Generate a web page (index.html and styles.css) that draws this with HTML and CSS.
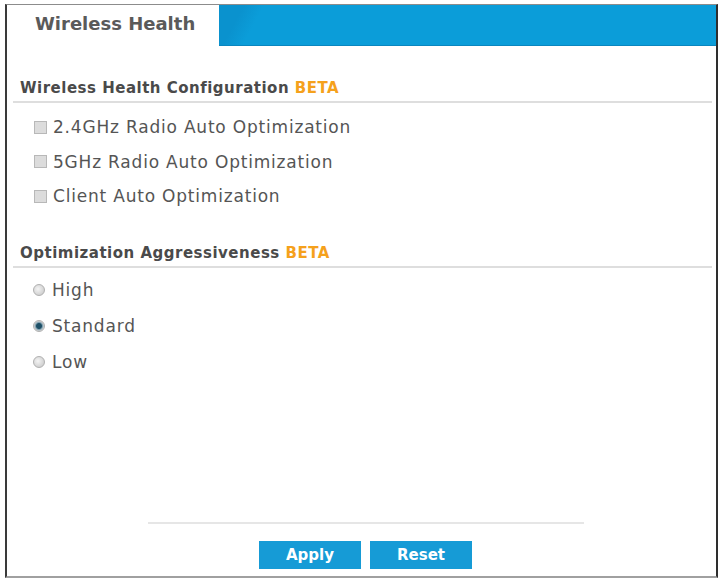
FILE: index.html
```html
<!DOCTYPE html>
<html lang="en">
<head>
    <meta charset="UTF-8">
    <meta name="viewport" content="width=device-width, initial-scale=1.0">
    <title>Wireless Health</title>
    <link rel="stylesheet" href="styles.css">
</head>
<body>
    <div class="frame">
        <div class="tabBar">
            <div class="tab">Wireless Health</div>
            <div class="tabFill"></div>
        </div>

        <div class="content">
            <div class="section">
                <h3 class="sectionTitle">Wireless Health Configuration <span class="beta">BETA</span></h3>
                <label class="option"><input type="checkbox" class="check"> 2.4GHz Radio Auto Optimization</label>
                <label class="option"><input type="checkbox" class="check"> 5GHz Radio Auto Optimization</label>
                <label class="option"><input type="checkbox" class="check"> Client Auto Optimization</label>
            </div>

            <div class="section radioGroup">
                <h3 class="sectionTitle">Optimization Aggressiveness <span class="beta">BETA</span></h3>
                <label class="option radioRow"><input type="radio" name="level" class="radio"> High</label>
                <label class="option radioRow"><input type="radio" name="level" class="radio" checked> Standard</label>
                <label class="option radioRow"><input type="radio" name="level" class="radio"> Low</label>
            </div>
        </div>

        <div class="footer">
            <div class="footerLine"></div>
            <div class="buttons">
                <button class="btn">Apply</button>
                <button class="btn">Reset</button>
            </div>
        </div>
    </div>
</body>
</html>
```

FILE: styles.css
```css
body {
    margin: 0;
    background-color: #ffffff;
    font-family: "DejaVu Sans", "Liberation Sans", sans-serif;
    color: #555555;
}
.frame {
    margin: 4px 2px 0 5px;
    height: 571px;
    border-top: 1px solid #8c8c8c;
    border-left: 2px solid #3a3a3a;
    border-right: 2px solid #2e2e2e;
    border-bottom: 2px solid #a0a0a0;
    display: flex;
    flex-direction: column;
}
/* tab strip */
.tabBar {
    display: flex;
    height: 41px;
}
.tab {
    width: 212px;
    padding-left: 28px;
    box-sizing: border-box;
    font-size: 18px;
    font-weight: bold;
    line-height: 38px;
    color: #5a5a5a;
}
.tabFill {
    flex: 1;
    background: linear-gradient(118deg, #0a92ce 0, #0a92ce 22px, #0b9dd9 40px, #0b9dd9 100%);
    border-bottom: 1px solid #0a86bf;
}
.content {
    flex: 1;
    padding: 0 4px 0 6px;
}
.section {
    margin-top: 33px;
}
.section + .section {
    margin-top: 30px;
}
.sectionTitle {
    margin: 0 0 7px 0;
    padding: 0 0 4px 7px;
    font-size: 15px;
    letter-spacing: 0.5px;
    font-weight: bold;
    color: #4a4a4a;
    border-bottom: 2px solid #dedede;
}
.radioGroup .sectionTitle {
    margin-bottom: 4px;
}
.beta {
    color: #f5a11c;
}
.option {
    display: flex;
    align-items: center;
    height: 34.5px;
    padding-left: 21px;
    font-size: 17px;
    letter-spacing: 0.8px;
    color: #555555;
}
.check {
    appearance: none;
    width: 13px;
    height: 13px;
    margin: 0 6px 0 0;
    background-color: #dcdcdc;
    border: 1px solid #b8b8b8;
}
.radioRow {
    height: 36px;
    padding-left: 20px;
}
.radio {
    appearance: none;
    width: 12px;
    height: 12px;
    margin: 0 7px 0 0;
    border-radius: 50%;
    border: 1px solid #b0b0b0;
    background: radial-gradient(circle at 40% 40%, #f4f4f4 0, #d2d2d2 70%);
}
.radio:checked {
    background: radial-gradient(circle, #1d4f66 0, #1d4f66 2.5px, #7f9faf 3.5px, #d8d8d8 5px);
}
/* bottom buttons */
.footer {
    padding-bottom: 7px;
}
.footerLine {
    margin: 0 132px 0 141px;
    border-top: 2px solid #e6e6e6;
}
.buttons {
    display: flex;
    justify-content: center;
    gap: 9px;
    margin-top: 17px;
    padding-left: 8px;
}
.btn {
    width: 102px;
    height: 28px;
    border: none;
    background-color: #169bd6;
    color: #ffffff;
    font-family: "DejaVu Sans", sans-serif;
    font-size: 15px;
    font-weight: bold;
    padding: 0;
}
```
